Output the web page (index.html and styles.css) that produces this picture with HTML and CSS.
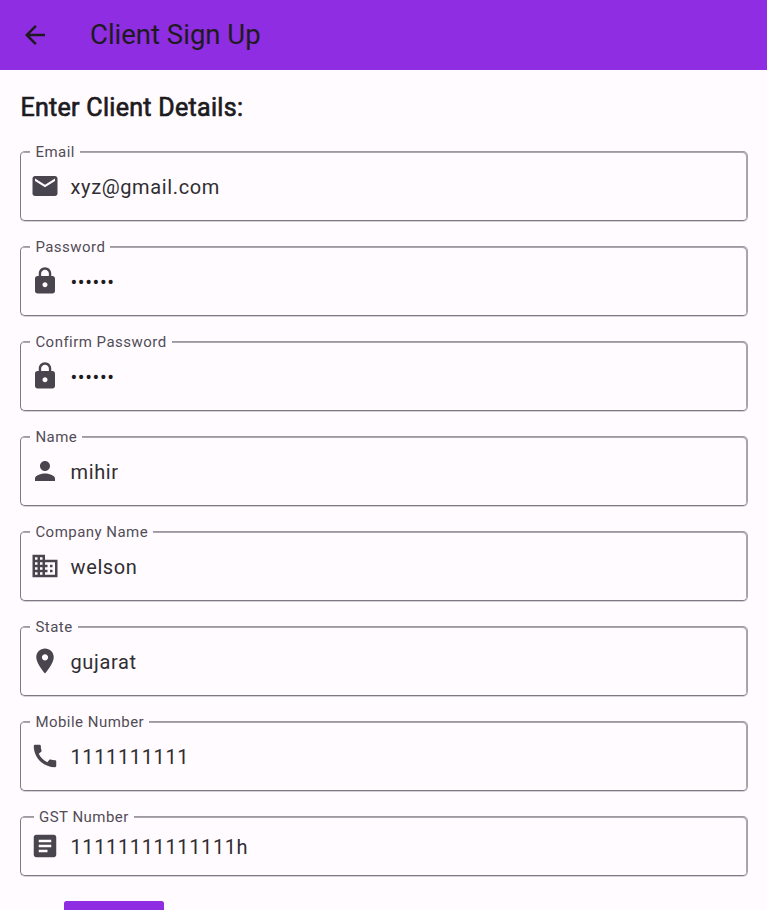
FILE: index.html
```html
<!DOCTYPE html>
<html lang="en">
<head>
<meta charset="utf-8">
<title>Client Sign Up</title>
<link rel="stylesheet" href="styles.css">
</head>
<body>
<header class="appbar">
  <svg class="icon back" viewBox="0 0 24 24"><path d="M20 11H7.830l5.590-5.590L12 4l-8 8 8 8 1.410-1.410L7.830 13H20v-2z"/></svg>
  <h1 class="title">Client Sign Up</h1>
</header>
<main class="form">
  <h2 class="heading">Enter Client Details:</h2>
  <fieldset class="field"><legend>Email</legend><div class="row">
    <svg class="icon" viewBox="0 0 24 24"><path d="M20 4H4c-1.100 0-1.990.9-1.990 2L2 18c0 1.100.9 2 2 2h16c1.100 0 2-.9 2-2V6c0-1.100-.9-2-2-2zm0 4l-8 5-8-5V6l8 5 8-5v2z"/></svg>
    <span class="value">xyz@gmail.com</span></div></fieldset>
  <fieldset class="field"><legend>Password</legend><div class="row">
    <svg class="icon" viewBox="0 0 24 24"><path d="M18 8h-1V6c0-2.760-2.240-5-5-5S7 3.240 7 6v2H6c-1.100 0-2 .9-2 2v10c0 1.100.9 2 2 2h12c1.100 0 2-.9 2-2V10c0-1.100-.9-2-2-2zm-6 9c-1.100 0-2-.9-2-2s.9-2 2-2 2 .9 2 2-.9 2-2 2zm3.100-9H8.900V6c0-1.710 1.390-3.100 3.100-3.100s3.100 1.390 3.100 3.100v2z"/></svg>
    <span class="value secret">••••••</span></div></fieldset>
  <fieldset class="field"><legend>Confirm Password</legend><div class="row">
    <svg class="icon" viewBox="0 0 24 24"><path d="M18 8h-1V6c0-2.760-2.240-5-5-5S7 3.240 7 6v2H6c-1.100 0-2 .9-2 2v10c0 1.100.9 2 2 2h12c1.100 0 2-.9 2-2V10c0-1.100-.9-2-2-2zm-6 9c-1.100 0-2-.9-2-2s.9-2 2-2 2 .9 2 2-.9 2-2 2zm3.100-9H8.900V6c0-1.710 1.390-3.100 3.100-3.100s3.100 1.390 3.100 3.100v2z"/></svg>
    <span class="value secret">••••••</span></div></fieldset>
  <fieldset class="field"><legend>Name</legend><div class="row">
    <svg class="icon" viewBox="0 0 24 24"><path d="M12 12c2.210 0 4-1.790 4-4s-1.790-4-4-4-4 1.790-4 4 1.790 4 4 4zm0 2c-2.670 0-8 1.340-8 4v2h16v-2c0-2.660-5.330-4-8-4z"/></svg>
    <span class="value">mihir</span></div></fieldset>
  <fieldset class="field"><legend>Company Name</legend><div class="row">
    <svg class="icon" viewBox="0 0 24 24"><path d="M12 7V3H2v18h20V7H12zM6 19H4v-2h2v2zm0-4H4v-2h2v2zm0-4H4V9h2v2zm0-4H4V5h2v2zm4 12H8v-2h2v2zm0-4H8v-2h2v2zm0-4H8V9h2v2zm0-4H8V5h2v2zm10 12h-8v-2h2v-2h-2v-2h2v-2h-2V9h8v10zm-2-8h-2v2h2v-2zm0 4h-2v2h2v-2z"/></svg>
    <span class="value">welson</span></div></fieldset>
  <fieldset class="field"><legend>State</legend><div class="row">
    <svg class="icon" viewBox="0 0 24 24"><path d="M12 2C8.130 2 5 5.130 5 9c0 5.250 7 13 7 13s7-7.750 7-13c0-3.870-3.130-7-7-7zm0 9.500c-1.380 0-2.500-1.120-2.500-2.500s1.120-2.500 2.500-2.500 2.500 1.120 2.500 2.500-1.120 2.500-2.500 2.500z"/></svg>
    <span class="value">gujarat</span></div></fieldset>
  <fieldset class="field"><legend>Mobile Number</legend><div class="row">
    <svg class="icon" viewBox="0 0 24 24"><path d="M20.010 15.380c-1.230 0-2.420-.2-3.530-.56-.35-.12-.74-.03-1.010.24l-1.570 1.970c-2.830-1.350-5.480-3.900-6.890-6.830l1.950-1.660c.27-.28.35-.67.24-1.020-.37-1.110-.56-2.300-.56-3.530 0-.54-.45-.99-.99-.99H4.190C3.650 3 3 3.240 3 3.990 3 13.280 10.730 21 20.010 21c.71 0 .99-.63.99-1.180v-3.450c0-.54-.45-.99-.99-.99z"/></svg>
    <span class="value">1111111111</span></div></fieldset>
  <fieldset class="field compact"><legend>GST Number</legend><div class="row">
    <svg class="icon" viewBox="0 0 24 24"><path d="M19 3H5c-1.100 0-2 .9-2 2v14c0 1.100.9 2 2 2h14c1.100 0 2-.9 2-2V5c0-1.100-.9-2-2-2zm-5 14H7v-2h7v2zm3-4H7v-2h10v2zm0-4H7V7h10v2z"/></svg>
    <span class="value">11111111111111h</span></div></fieldset>
  <button class="submit" aria-label="Submit"></button>
</main>
</body>
</html>
```
FILE: styles.css
```css
* { box-sizing: border-box; }
html { overflow: hidden; }
body {
  margin: 0;
  height: 910px;
  overflow: hidden;
  background: #fffbff;
  color: #1d1b1e;
  font-family: Roboto, sans-serif;
}
.appbar {
  display: flex;
  align-items: center;
  gap: 40px;
  height: 70px;
  padding: 0 20px;
  background: #8f2de2;
}
.icon {
  flex: none;
  width: 30px;
  height: 30px;
  fill: #49454e;
}
.back { fill: #1d1b1e; }
.title {
  margin: 0;
  padding-bottom: 2px;
  font-size: 27.5px;
  font-weight: 400;
  line-height: 35px;
}
.form {
  display: flex;
  flex-direction: column;
  padding: 20px 19px 0 20px;
}
.heading {
  margin: 0 0 18px;
  height: 35px;
  padding-left: 0.4px;
  font-size: 25px;
  font-weight: 400;
  line-height: 35px;
  letter-spacing: 0.3px;
  -webkit-text-stroke: 0.7px #1d1b1e;
}
.field {
  height: 78px;
  margin: 0 0 17px;
  padding: 0 9px;
  border: 1px solid #7d7882;
  border-top-color: #9d99a1;
  border-right-color: #a5a1a9;
  border-radius: 5px;
  box-shadow: inset -1px 1px 0 #aaa6ae, 0 1px 0 #d5d1d8;
  min-width: 0;
}
.field legend {
  height: 17px;
  padding: 0 5px 0 5.4px;
  background: #fffbff;
  color: #514d56;
  font-size: 15px;
  line-height: 18px;
  letter-spacing: 0.47px;
}
.row {
  display: flex;
  align-items: center;
  gap: 10px;
  height: 52px;
}
.value {
  padding: 2px 0 0 0.5px;
  color: #302e31;
  font-size: 20px;
  line-height: 30px;
  letter-spacing: 0.625px;
}
.secret { color: #1d1b1e; }
.compact { height: 68px; }
.compact legend { margin-left: 4px; padding-left: 5px; }
.compact .row { height: 42px; }
.submit {
  width: 100px;
  height: 50px;
  margin: 8px 0 0 44px;
  padding: 0;
  border: 0;
  border-radius: 2.5px;
  background: #8f2de2;
}
```
